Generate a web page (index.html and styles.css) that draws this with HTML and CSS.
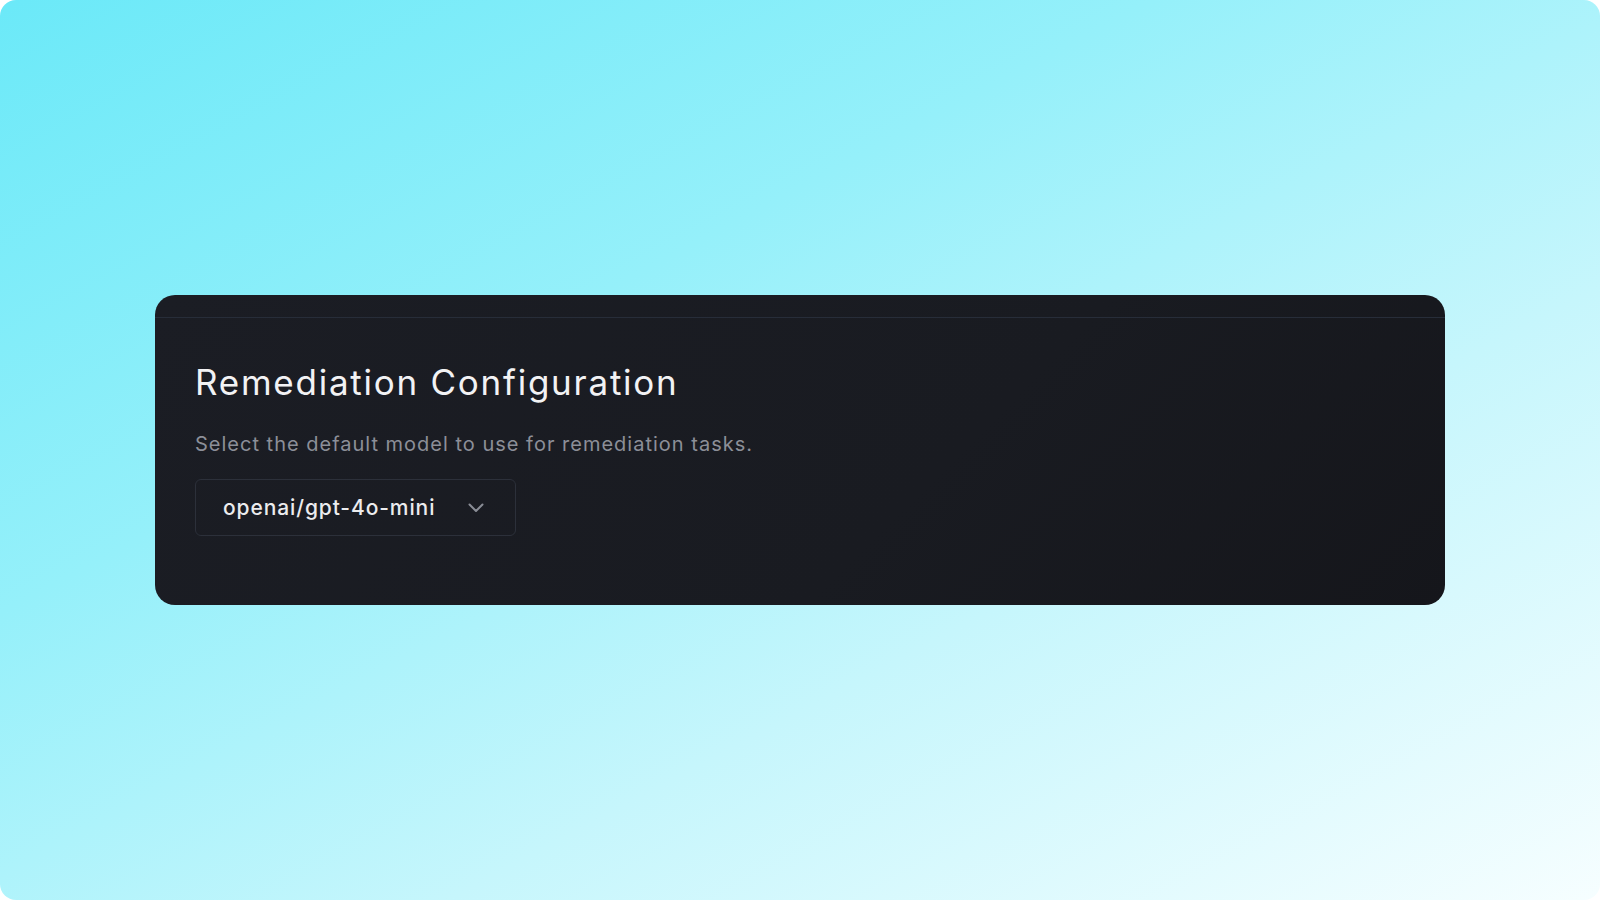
FILE: index.html
```html
<!DOCTYPE html>
<html lang="en">
<head>
<meta charset="utf-8">
<title>Remediation Configuration</title>
<link rel="stylesheet" href="styles.css">
</head>
<body>
<div class="frame">
  <section class="card">
    <div class="card-strip"></div>
    <div class="card-body">
      <h2 class="card-title">Remediation Configuration</h2>
      <p class="card-desc">Select the default model to use for remediation tasks.</p>
      <div class="select">
        <span class="select-value">openai/gpt-4o-mini</span>
        <svg class="select-chevron" width="16" height="10" viewBox="0 0 16 10" fill="none">
          <path d="M1.5 1.5 L8 8 L14.5 1.5" stroke="currentColor" stroke-width="2" stroke-linecap="round" stroke-linejoin="round"/>
        </svg>
      </div>
    </div>
  </section>
</div>
</body>
</html>
```
FILE: styles.css
```css
html, body {
  margin: 0;
  padding: 0;
  background: #ffffff;
}
body {
  font-family: Inter, "Noto Sans", sans-serif;
}
.frame {
  height: 900px;
  border-radius: 16px;
  background: linear-gradient(152deg, #6be9f8 0%, #95f0fa 35%, #c6f6fc 65%, #f6feff 100%);
  display: flex;
  align-items: center;
  justify-content: center;
}
.card {
  width: 1290px;
  height: 310px;
  box-sizing: border-box;
  border-radius: 20px;
  background: linear-gradient(135deg, #1b1d24 0%, #191b21 60%, #15161b 100%);
  overflow: hidden;
  display: flex;
  flex-direction: column;
}
.card-strip {
  height: 22px;
  border-bottom: 1px solid #272d39;
  flex: none;
}
.card-body {
  padding: 42px 40px 0 40px;
}
.card-title {
  margin: 0;
  color: #f2f2f4;
  font-size: 35px;
  font-weight: 400;
  line-height: 44px;
  letter-spacing: 1.75px;
}
.card-desc {
  margin: 26px 0 0 0;
  color: #8c8f98;
  font-size: 20px;
  line-height: 28px;
  letter-spacing: 1px;
}
.select {
  margin-top: 21px;
  width: 321px;
  height: 57px;
  box-sizing: border-box;
  border: 1px solid #2c303a;
  border-radius: 6px;
  display: flex;
  align-items: center;
  padding: 0 31px 0 27px;
  justify-content: space-between;
}
.select-value {
  color: #ececee;
  font-size: 21px;
  font-weight: 500;
  letter-spacing: 0.9px;
}
.select-chevron {
  color: #8a8d96;
}
```
